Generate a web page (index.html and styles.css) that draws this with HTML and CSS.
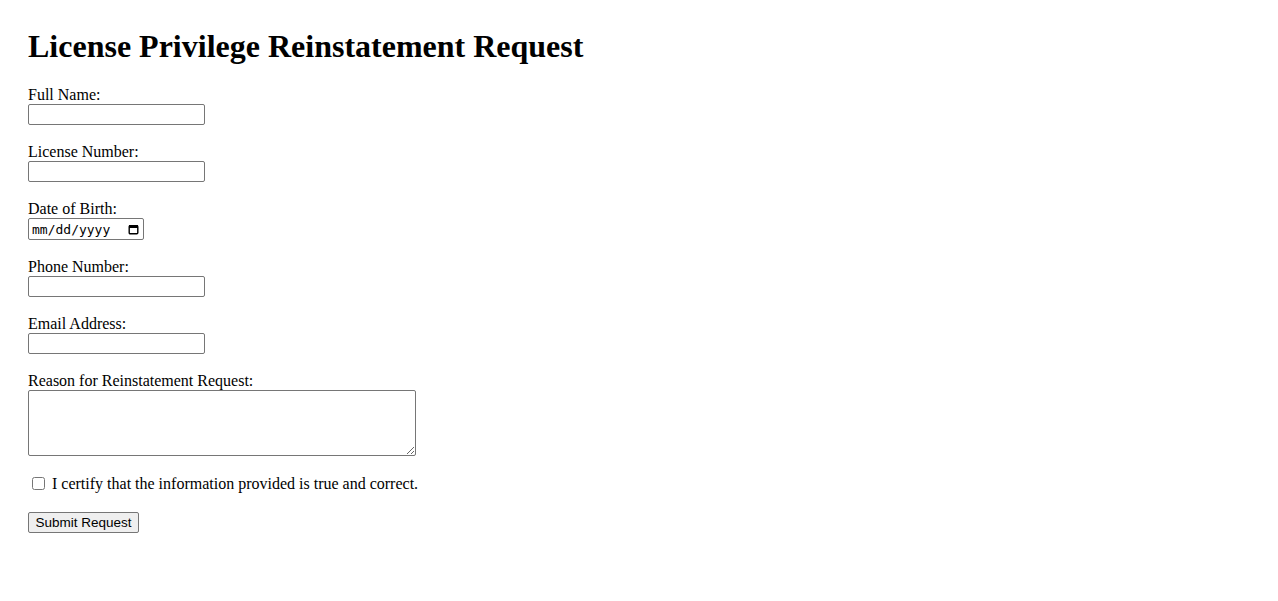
FILE: index.html
```html
<!DOCTYPE html>
<html lang="en">
<head>
    <meta charset="UTF-8">
    <meta name="viewport" content="width=device-width, initial-scale=1.0">
    <title>License Privilege Reinstatement Request</title>
    <link rel="stylesheet" href="styles.css">
</head>
<body>
    <h1>License Privilege Reinstatement Request</h1>
    <form class="pedido">
        <div class="campo">
            <label for="nome">Full Name:</label>
            <input type="text" id="nome" name="nome">
        </div>

        <div class="campo">
            <label for="licenca">License Number:</label>
            <input type="text" id="licenca" name="licenca">
        </div>

        <div class="campo">
            <label>Date of Birth:</label>
            <div class="data-campo">
                <span>mm/dd/yyyy</span>
                <svg width="11" height="11" viewBox="0 0 11 11"><rect x="1.2" y="1.7" width="8.6" height="8.1" rx="1" fill="none" stroke="#000" stroke-width="1.4"/><rect x="1" y="1" width="9" height="3" fill="#000"/></svg>
            </div>
        </div>

        <div class="campo">
            <label for="telefone">Phone Number:</label>
            <input type="text" id="telefone" name="telefone">
        </div>

        <div class="campo">
            <label for="email">Email Address:</label>
            <input type="text" id="email" name="email">
        </div>

        <div class="campo">
            <label for="motivo">Reason for Reinstatement Request:</label>
            <textarea id="motivo" name="motivo"></textarea>
        </div>

        <div class="certifico">
            <input type="checkbox" id="certifico" name="certifico">
            <label for="certifico">I certify that the information provided is true and correct.</label>
        </div>

        <button type="submit">Submit Request</button>
    </form>
</body>
</html>
```

FILE: styles.css
```css
body {
    font-family: "Liberation Serif", "Times New Roman", serif;
    font-size: 16px;
    margin: 20px 28px;
    color: #000;
    background-color: #fff;
}

h1 {
    font-size: 32px;
    margin: 0 0 21px 0;
    padding-top: 8px;
}

.campo {
    margin-bottom: 18px;
}

label {
    display: block;
    line-height: 18px;
}

input[type="text"] {
    display: block;
    width: 177px;
    height: 21px;
    box-sizing: border-box;
    border: 1px solid #767676;
    border-radius: 2px;
    margin: 0;
}

.data-campo {
    display: flex;
    align-items: center;
    justify-content: space-between;
    width: 116px;
    height: 22px;
    box-sizing: border-box;
    border: 1px solid #767676;
    border-radius: 2px;
    padding: 0 4px 0 3px;
    font-family: "DejaVu Sans Mono", "Liberation Mono", monospace;
    font-size: 13px;
}

textarea {
    display: block;
    width: 388px;
    height: 66px;
    box-sizing: border-box;
    border: 1px solid #767676;
    border-radius: 2px;
    margin: 0;
}

.certifico {
    display: flex;
    align-items: flex-start;
    margin: 19px 0 19px 0;
}

.certifico input {
    width: 13px;
    height: 13px;
    margin: 2px 7px 0 4px;
}

button {
    font-family: "Liberation Sans", Arial, sans-serif;
    font-size: 13.5px;
    height: 21px;
    padding: 0 6.5px;
    border: 1px solid #767676;
    border-radius: 2px;
    background-color: #efefef;
}
```
